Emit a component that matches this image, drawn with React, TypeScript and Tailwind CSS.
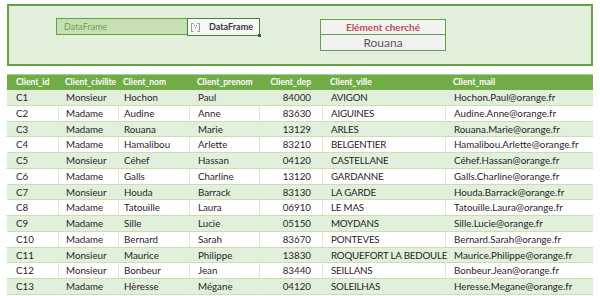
const rows = [
  ["C1", "Monsieur", "Hochon", "Paul", "84000", "AVIGON", "Hochon.Paul@orange.fr"],
  ["C2", "Madame", "Audine", "Anne", "83630", "AIGUINES", "Audine.Anne@orange.fr"],
  ["C3", "Madame", "Rouana", "Marie", "13129", "ARLES", "Rouana.Marie@orange.fr"],
  ["C4", "Madame", "Hamalibou", "Arlette", "83210", "BELGENTIER", "Hamalibou.Arlette@orange.fr"],
  ["C5", "Monsieur", "Céhef", "Hassan", "04120", "CASTELLANE", "Céhef.Hassan@orange.fr"],
  ["C6", "Madame", "Galls", "Charline", "13120", "GARDANNE", "Galls.Charline@orange.fr"],
  ["C7", "Monsieur", "Houda", "Barrack", "83130", "LA GARDE", "Houda.Barrack@orange.fr"],
  ["C8", "Madame", "Tatouille", "Laura", "06910", "LE MAS", "Tatouille.Laura@orange.fr"],
  ["C9", "Madame", "Sille", "Lucie", "05150", "MOYDANS", "Sille.Lucie@orange.fr"],
  ["C10", "Madame", "Bernard", "Sarah", "83670", "PONTEVES", "Bernard.Sarah@orange.fr"],
  ["C11", "Monsieur", "Maurice", "Philippe", "13830", "ROQUEFORT LA BEDOULE", "Maurice.Philippe@orange.fr"],
  ["C12", "Monsieur", "Bonbeur", "Jean", "83440", "SEILLANS", "Bonbeur.Jean@orange.fr"],
  ["C13", "Madame", "Hèresse", "Mégane", "04120", "SOLEILHAS", "Heresse.Megane@orange.fr"],
];

const headers = ["Client_id", "Client_civilite", "Client_nom", "Client_prenom", "Client_dep", "Client_ville", "Client_mail"];

const cellPad = [
  "pl-[9px]",
  "pl-[7px]",
  "pl-[5px]",
  "pl-[8px]",
  "pr-[11px] text-right",
  "pl-[8px] relative z-[1] tracking-[-0.2px]",
  "pl-[8px]",
];

function TypeIcon() {
  return (
    <svg width="9" height="9" viewBox="0 0 9 9" className="shrink-0">
      <path d="M2.5 0.5H0.5V8.5H2.5M6.5 0.5H8.5V8.5H6.5" fill="none" stroke="#8c8c8c" strokeWidth="0.9" />
      <rect x="3" y="2" width="1" height="1" fill="#8c8c8c" />
      <rect x="5" y="2" width="1" height="1" fill="#8c8c8c" />
      <rect x="4" y="3.5" width="1" height="2" fill="#8c8c8c" />
    </svg>
  );
}

export default function App() {
  return (
    <div className="w-[600px] h-[296px] overflow-hidden bg-white px-[7px] pt-[4px] font-['Lato',sans-serif] text-[9px] text-[#262626]">
      {/* Top panel */}
      <div className="h-[62px] border-2 border-[#6a9e47] bg-[#e2efda] flex items-start pl-[47px]">
        <div className="mt-[12px] flex items-stretch">
          <div className="w-[132px] h-[17px] border border-[#6a9e47] bg-[#c6e0b4] text-[#6f9f50] pl-[7px] flex items-center">
            DataFrame
          </div>
          <div className="relative -ml-px w-[73px] h-[18px] border border-[#4f7f3c] bg-[#f7f7f7] flex items-center gap-[9px] pl-[3px] font-bold text-[#3a3a3a]">
            <TypeIcon />
            <span>DataFrame</span>
            <span className="absolute -right-[2px] -bottom-[2px] w-[3px] h-[3px] bg-[#2f6b2f]" />
          </div>
        </div>
        <div className="mt-[13px] ml-[60px] w-[126px] border border-[#6a9e47] flex flex-col">
          <div className="h-[15px] bg-[#f2f2f2] border-b border-[#6a9e47] flex items-center justify-center font-bold text-[10px] text-[#c0504d]">
            Elément cherché
          </div>
          <div className="h-[15px] bg-[#f2f2f2] flex items-center justify-center text-[12px] text-[#595959]">
            Rouana
          </div>
        </div>
      </div>

      {/* Table */}
      <div className="mt-[8px] border-t border-[#a9d08e]">
        <div className="grid grid-cols-[51px_60px_71px_70px_63px_123px_148px]">
          {headers.map((h, i) => (
            <div
              key={h}
              className={`h-[15px] bg-[#70ad47] text-white font-bold text-[8.5px] tracking-normal whitespace-nowrap flex items-center ${i === 4 ? "justify-end" : ""} ${cellPad[i]}`}
            >
              {h}
            </div>
          ))}
          {rows.map((r, ri) =>
            r.map((c, ci) => {
              const green = ri % 2 === 0;
              return (
                <div
                  key={ri + "-" + ci}
                  className={`h-[15.75px] border-b border-[#c6e0b4] flex items-center whitespace-nowrap text-[9.75px] text-[#1f1f1f] ${ci > 0 ? (green ? "border-l border-l-[#e2efda]" : "border-l border-l-[#d9ead0]") : ""} ${ci === 4 ? "justify-end" : ""} ${green ? "bg-[#e2efda]" : "bg-white"} ${cellPad[ci]}`}
                >
                  {c}
                </div>
              );
            })
          )}
        </div>
      </div>
    </div>
  );
}
